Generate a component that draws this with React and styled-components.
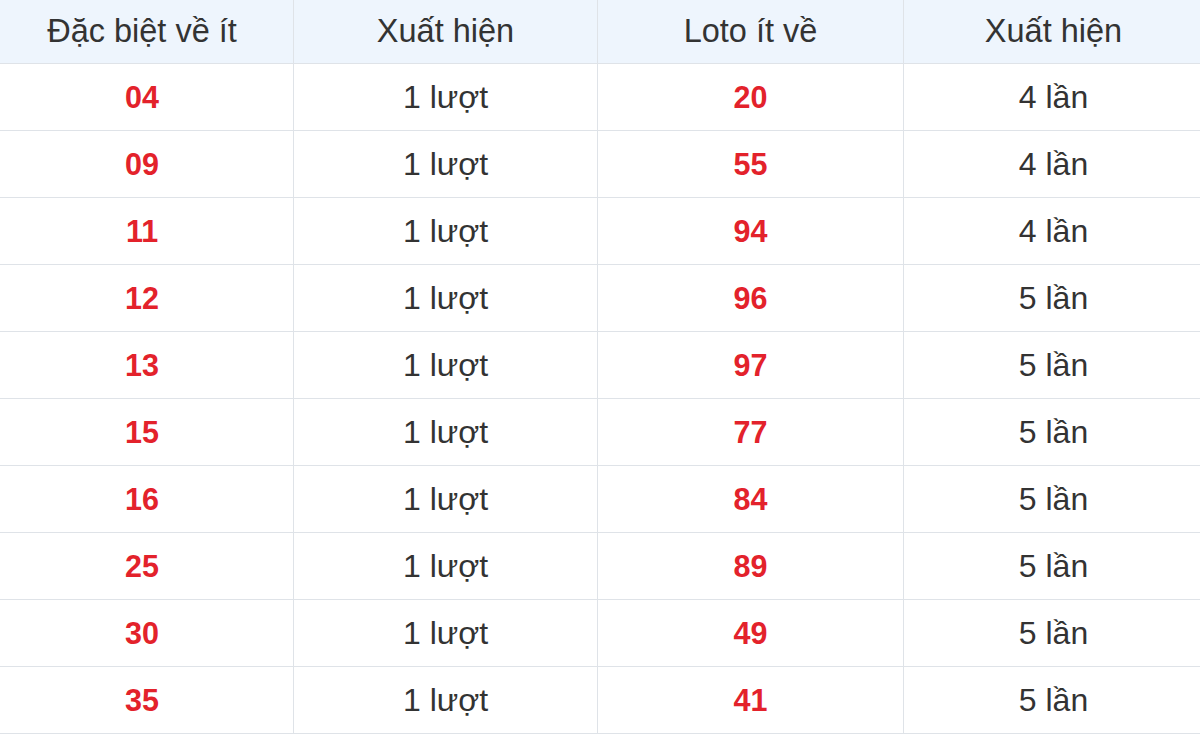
import styled, { createGlobalStyle } from "styled-components";

const ROWS = [
  ["04", "1 lượt", "20", "4 lần"],
  ["09", "1 lượt", "55", "4 lần"],
  ["11", "1 lượt", "94", "4 lần"],
  ["12", "1 lượt", "96", "5 lần"],
  ["13", "1 lượt", "97", "5 lần"],
  ["15", "1 lượt", "77", "5 lần"],
  ["16", "1 lượt", "84", "5 lần"],
  ["25", "1 lượt", "89", "5 lần"],
  ["30", "1 lượt", "49", "5 lần"],
  ["35", "1 lượt", "41", "5 lần"],
];

const HEADERS = ["Đặc biệt về ít", "Xuất hiện", "Loto ít về", "Xuất hiện"];

const GlobalStyle = createGlobalStyle`
  body {
    margin: 0;
    background: #fff;
    font-family: "Liberation Sans", Arial, sans-serif;
    overflow: hidden;
  }
`;

const Wrap = styled.div`
  width: 1200px;
  height: 736px;
  overflow: hidden;
`;

const Table = styled.div`
  display: grid;
  grid-template-columns: 302px 304px 306px 300px;
  margin-left: -9px;
`;

const Cell = styled.div`
  box-sizing: border-box;
  height: ${(p) => (p.$head ? "64px" : "67px")};
  display: flex;
  align-items: center;
  justify-content: center;
  border-bottom: 1px solid #dfe3e8;
  border-left: ${(p) => (p.$first ? "none" : "1px solid #dfe3e8")};
  background: ${(p) => (p.$head ? "#eef5fd" : "#fff")};
  color: ${(p) => (p.$red ? "#e3222b" : "#333")};
  font-size: ${(p) => (p.$head ? "32.5px" : p.$red ? "30.5px" : "32px")};
  font-weight: ${(p) => (p.$red ? 700 : 400)};
  padding-top: ${(p) => (p.$head ? "0" : "1px")};
`;

export default function App() {
  return (
    <>
      <GlobalStyle />
      <Wrap>
        <Table>
          {HEADERS.map((h, i) => (
            <Cell key={"h" + i} $head $first={i === 0}>
              {h}
            </Cell>
          ))}
          {ROWS.map((row, r) =>
            row.map((v, i) => (
              <Cell key={r + "-" + i} $first={i === 0} $red={i % 2 === 0}>
                {v}
              </Cell>
            ))
          )}
        </Table>
      </Wrap>
    </>
  );
}
